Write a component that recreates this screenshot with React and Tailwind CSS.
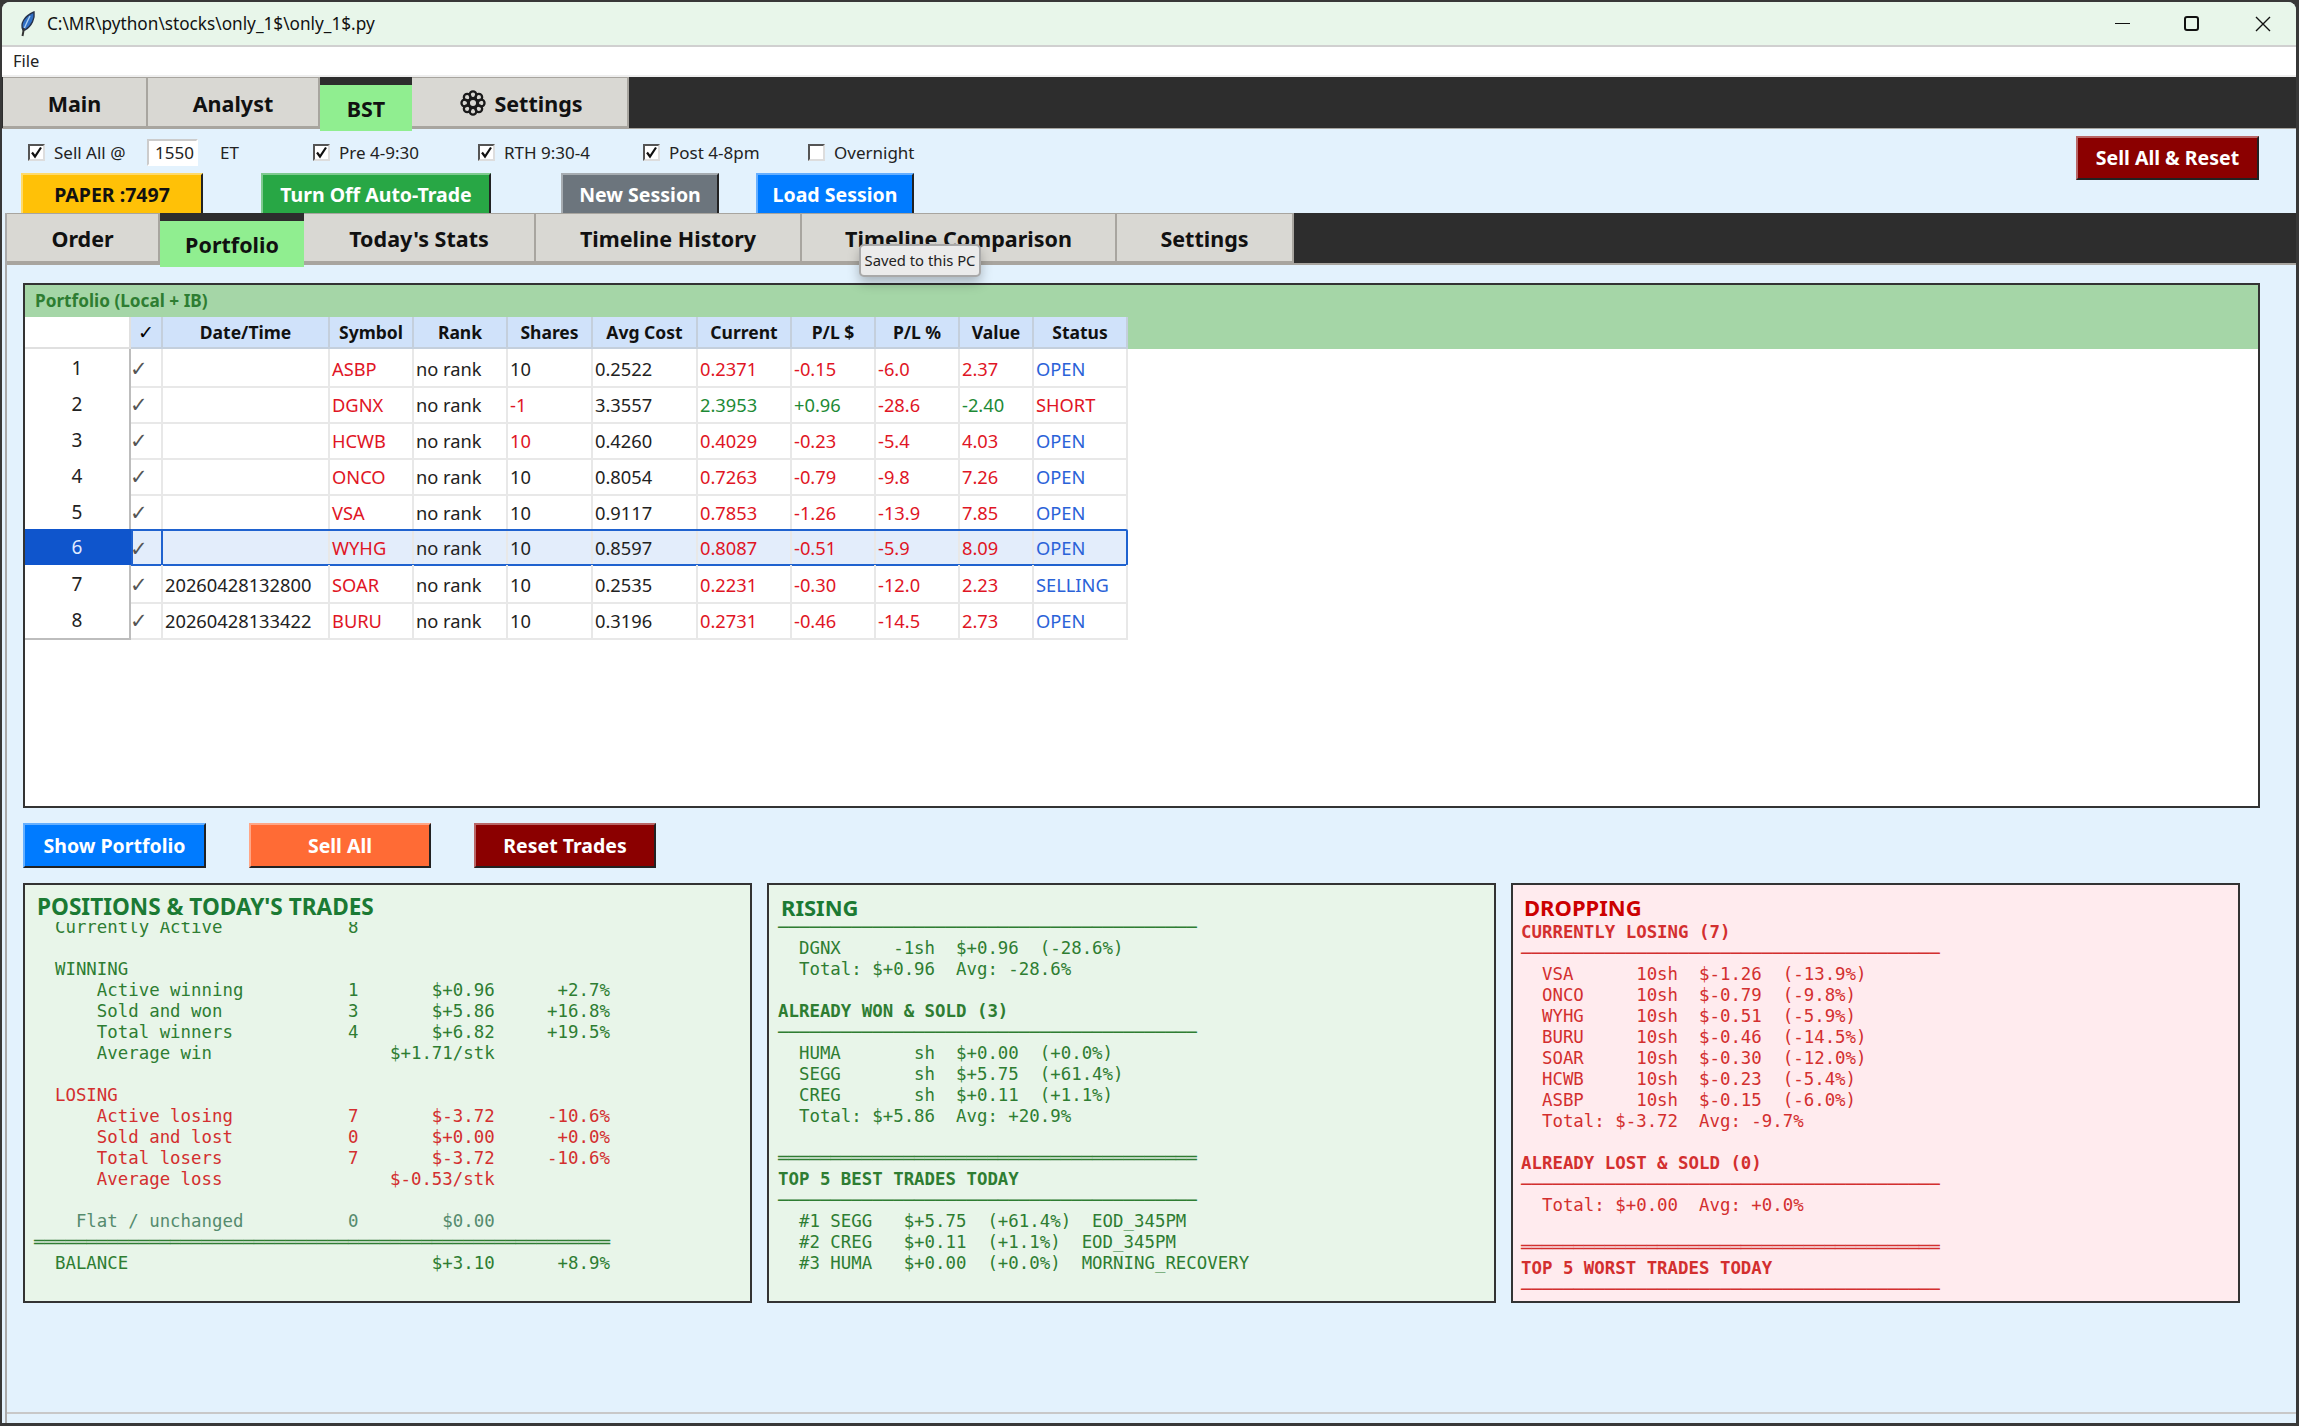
import React from 'react';

const GRID = 'grid grid-cols-[106px_32px_167px_84px_94px_85px_105px_94px_84px_84px_74px_94px]';

const rows = [
  ['', 'ASBP', '10', '0.2522', '0.2371', '-0.15', '-6.0', '2.37', 'OPEN'],
  ['', 'DGNX', '-1', '3.3557', '2.3953', '+0.96', '-28.6', '-2.40', 'SHORT'],
  ['', 'HCWB', '10', '0.4260', '0.4029', '-0.23', '-5.4', '4.03', 'OPEN'],
  ['', 'ONCO', '10', '0.8054', '0.7263', '-0.79', '-9.8', '7.26', 'OPEN'],
  ['', 'VSA', '10', '0.9117', '0.7853', '-1.26', '-13.9', '7.85', 'OPEN'],
  ['', 'WYHG', '10', '0.8597', '0.8087', '-0.51', '-5.9', '8.09', 'OPEN'],
  ['20260428132800', 'SOAR', '10', '0.2535', '0.2231', '-0.30', '-12.0', '2.23', 'SELLING'],
  ['20260428133422', 'BURU', '10', '0.3196', '0.2731', '-0.46', '-14.5', '2.73', 'OPEN'],
];

// fixed column layout of the summary text
const stat = (label, n = '', money = '', pct = '') =>
  label.padEnd(30) + n.padEnd(1) + money.padStart(13) + pct.padStart(11);

const G = 'text-[#2e7d32]';
const R = 'text-[#d32f2f]';

const single = '─'.repeat(40);
const double = '═'.repeat(40);

const positionLines = [
  [stat('  Currently Active', '8'), G],
  ['', G],
  ['  WINNING', G],
  [stat('      Active winning', '1', '$+0.96', '+2.7%'), G],
  [stat('      Sold and won', '3', '$+5.86', '+16.8%'), G],
  [stat('      Total winners', '4', '$+6.82', '+19.5%'), G],
  [stat('      Average win', ' ', '$+1.71/stk'), G],
  ['', G],
  ['  LOSING', R],
  [stat('      Active losing', '7', '$-3.72', '-10.6%'), R],
  [stat('      Sold and lost', '0', '$+0.00', '+0.0%'), R],
  [stat('      Total losers', '7', '$-3.72', '-10.6%'), R],
  [stat('      Average loss', ' ', '$-0.53/stk'), R],
  ['', G],
  [stat('    Flat / unchanged', '0', '$0.00'), 'text-[#558b6e]'],
  ['═'.repeat(55), G],
  [stat('  BALANCE', ' ', '$+3.10', '+8.9%'), G],
];

const risingLines = [
  [single, G],
  ['  DGNX     -1sh  $+0.96  (-28.6%)', G],
  ['  Total: $+0.96  Avg: -28.6%', G],
  ['', G],
  ['ALREADY WON & SOLD (3)', G, true],
  [single, G],
  ['  HUMA       sh  $+0.00  (+0.0%)', G],
  ['  SEGG       sh  $+5.75  (+61.4%)', G],
  ['  CREG       sh  $+0.11  (+1.1%)', G],
  ['  Total: $+5.86  Avg: +20.9%', G],
  ['', G],
  [double, G],
  ['TOP 5 BEST TRADES TODAY', G, true],
  [single, G],
  ['  #1 SEGG   $+5.75  (+61.4%)  EOD_345PM', G],
  ['  #2 CREG   $+0.11  (+1.1%)  EOD_345PM', G],
  ['  #3 HUMA   $+0.00  (+0.0%)  MORNING_RECOVERY', G],
];

const droppingLines = [
  ['CURRENTLY LOSING (7)', R, true],
  [single, R],
  ['  VSA      10sh  $-1.26  (-13.9%)', R],
  ['  ONCO     10sh  $-0.79  (-9.8%)', R],
  ['  WYHG     10sh  $-0.51  (-5.9%)', R],
  ['  BURU     10sh  $-0.46  (-14.5%)', R],
  ['  SOAR     10sh  $-0.30  (-12.0%)', R],
  ['  HCWB     10sh  $-0.23  (-5.4%)', R],
  ['  ASBP     10sh  $-0.15  (-6.0%)', R],
  ['  Total: $-3.72  Avg: -9.7%', R],
  ['', R],
  ['ALREADY LOST & SOLD (0)', R, true],
  [single, R],
  ['  Total: $+0.00  Avg: +0.0%', R],
  ['', R],
  [double, R],
  ['TOP 5 WORST TRADES TODAY', R, true],
  [single, R],
];

const Feather = () => (
  <svg width="20" height="26" viewBox="0 0 20 26" className="shrink-0">
    <path d="M5 19 C2 13 6 5 16 1 C17 7 14 15 7 19 Z" fill="#2f6fc4" stroke="#26324a" strokeWidth="1.4" />
    <path d="M12 5 C10 9 8 13 6 18" stroke="#a9cdf0" strokeWidth="1.4" fill="none" />
    <path d="M6 17 L4.5 25" stroke="#333" strokeWidth="2" fill="none" />
  </svg>
);

const Gear = () => (
  <svg width="26" height="26" viewBox="0 0 25 25" className="shrink-0 ml-[4px] -mt-[2px]">
    <g fill="none" stroke="#1a1a1a" strokeWidth="2.2">
      <circle cx="12.5" cy="4.6" r="3.2" />
      <circle cx="18.1" cy="6.9" r="3.2" />
      <circle cx="20.4" cy="12.5" r="3.2" />
      <circle cx="18.1" cy="18.1" r="3.2" />
      <circle cx="12.5" cy="20.4" r="3.2" />
      <circle cx="6.9" cy="18.1" r="3.2" />
      <circle cx="4.6" cy="12.5" r="3.2" />
      <circle cx="6.9" cy="6.9" r="3.2" />
      <circle cx="12.5" cy="12.5" r="4" />
    </g>
  </svg>
);

const Tab = ({ width, active, children }) =>
  active ? (
    <div className={`${width} relative z-10 flex flex-col`}>
      <div className="h-[8px] shrink-0 bg-[#2d2d2d]" />
      <div className="h-[46px] shrink-0 bg-[#90ee90] flex items-center justify-center pt-[2px] text-[21.5px] font-bold text-[#111]">{children}</div>
    </div>
  ) : (
    <div className={`${width} h-full bg-[#d9d8d3] border-r-2 border-b-2 border-t border-[#a8a59f] flex items-center justify-center gap-[8px] pt-[4px] text-[21.5px] font-bold text-[#111]`}>{children}</div>
  );

const Check = ({ on = true, label, width }) => (
  <div className={`${width} flex items-center gap-[9px] text-[17px] text-[#222]`}>
    <div className="w-[17px] h-[17px] bg-white border-2 border-[#555] border-r-[#ddd] border-b-[#ddd] flex items-center justify-center">
      {on && (
        <svg width="13" height="13" viewBox="0 0 13 13">
          <path d="M2 6.5 L5 10.5 L11 1.5" fill="none" stroke="#111" strokeWidth="2.2" />
        </svg>
      )}
    </div>
    <span>{label}</span>
  </div>
);

const Btn = ({ className, children }) => (
  <div className={`border-2 border-t-white/40 border-l-white/40 border-r-[#222] border-b-[#222] flex items-center justify-center text-[19.5px] font-bold ${className}`}>{children}</div>
);

const HeadCell = ({ children }) => (
  <div className="bg-[#d0e2fa] border-r-2 border-b-2 border-[#c4cfdc] flex items-center justify-center text-[17.5px] font-bold text-[#111]">{children}</div>
);

const Cell = ({ color = 'text-[#222]', children }) => (
  <div className={`border-r-2 border-b-2 border-[#e8e8e8] pl-[2px] pt-[2px] flex items-center text-[18.3px] whitespace-nowrap overflow-hidden ${color}`}>{children}</div>
);

const TableRow = ({ idx, row }) => {
  const selected = idx === 6;
  const [date, symbol, shares, avg, cur, pl, pct, value, status] = row;
  const gain = pl.startsWith('+');
  const priceColor = gain ? 'text-[#1d8a36]' : 'text-[#e01525]';
  const sharesColor = shares === '-1' || symbol === 'HCWB' ? 'text-[#e01525]' : 'text-[#222]';
  const statusColor = status === 'SHORT' ? 'text-[#e01525]' : 'text-[#2a62d8]';
  return (
    <div className={`${GRID} h-[36px] w-fit`}>
      <div className={`border-r-2 border-b-2 pt-[2px] flex items-center justify-center text-[19px] ${selected ? 'bg-[#0f55cc] border-[#0f55cc] text-[#dfeaff]' : 'bg-white border-[#bdbdbd] text-[#222]'}`}>{idx}</div>
      <div className={`col-span-11 grid grid-cols-subgrid ${selected ? 'bg-[#e3edfb] outline-2 -outline-offset-2 outline-[#1f62cf] rounded-r-[2px]' : ''}`}>
        <div className={`flex items-center pt-[5px] text-[21px] text-[#555] font-['DejaVu_Sans',sans-serif] ${selected ? 'outline-2 -outline-offset-2 outline-[#1f62cf]' : 'border-r-2 border-b-2 border-[#e8e8e8]'}`}><span className="-ml-[1px]">✓</span></div>
        <Cell>{date}</Cell>
        <Cell color="text-[#e01525]">{symbol}</Cell>
        <Cell>no rank</Cell>
        <Cell color={sharesColor}>{shares}</Cell>
        <Cell>{avg}</Cell>
        <Cell color={priceColor}>{cur}</Cell>
        <Cell color={priceColor}>{pl}</Cell>
        <Cell color="text-[#e01525]">{pct}</Cell>
        <Cell color={priceColor}>{value}</Cell>
        <Cell color={statusColor}>{status}</Cell>
      </div>
    </div>
  );
};

const Summary = ({ tint, title, titleClass, titlePad, offset, textPad, lines }) => (
  <div className={`w-[729px] h-[420px] border-2 border-[#333] ${tint} flex flex-col overflow-hidden`}>
    <div className={`h-[37px] shrink-0 flex items-end ${titlePad} font-bold leading-[30px] ${titleClass}`}>{title}</div>
    <div className="flex-1 overflow-hidden">
      <div className={`${offset} ${textPad} font-['DejaVu_Sans_Mono',monospace] text-[17.4px]`}>
        {lines.map(([text, color, bold], i) => (
          <div key={i} className={`h-[21px] leading-[21px] whitespace-pre ${color} ${bold ? 'font-bold' : ''}`}>{text}</div>
        ))}
      </div>
    </div>
  </div>
);

export default function App() {
  return (
    <div className="w-[2299px] h-[1426px] bg-[#383838] pt-[2px] pl-[2px] pr-[3px] font-['Noto_Sans',sans-serif] overflow-hidden">
      <div className="h-[1421px] rounded-t-[8px] overflow-hidden bg-[#e3f2fd] flex flex-col">
        {/* title bar */}
        <div className="h-[45px] shrink-0 bg-[#e8f6ea] border-b-2 border-[#d0d0d0] flex items-center">
          <div className="ml-[16px] w-[29px]"><Feather /></div>
          <span className="text-[17.2px] text-[#111]">C:\MR\python\stocks\only_1$\only_1$.py</span>
          <div className="ml-auto flex items-center">
            <div className="w-[15px] h-[1.5px] bg-[#111] mr-[54px]" />
            <div className="w-[15px] h-[15px] border-2 border-[#111] rounded-[3px] mr-[56px]" />
            <svg width="16" height="16" viewBox="0 0 16 16" className="mr-[25px]">
              <path d="M1 1 L15 15 M15 1 L1 15" stroke="#111" strokeWidth="1.4" />
            </svg>
          </div>
        </div>
        {/* menu */}
        <div className="h-[30px] shrink-0 bg-white border-b-2 border-[#eeeeee] flex items-center pl-[11px] text-[16.5px] text-[#222]">File</div>

        {/* main tabs */}
        <div className="h-[52px] shrink-0 bg-[#2d2d2d] flex border-b border-[#a8a59f] pl-[1px]">
          <Tab width="w-[145px]">Main</Tab>
          <Tab width="w-[172px]">Analyst</Tab>
          <Tab width="w-[92px]" active>BST</Tab>
          <Tab width="w-[217px]"><Gear />Settings</Tab>
        </div>

        {/* session controls */}
        <div className="h-[84px] shrink-0 flex">
          <div className="flex-1 flex flex-col">
            <div className="h-[44px] flex items-center pt-[3px] pl-[26px]">
              <Check label="Sell All @" width="w-[119px]" />
              <div className="w-[51px] h-[27px] bg-white border-2 border-[#ccc] border-r-white border-b-white flex items-center pl-[6px] text-[17px] text-[#222]">1550</div>
              <span className="ml-[22px] w-[93px] text-[17px] text-[#222]">ET</span>
              <Check label="Pre 4-9:30" width="w-[165px]" />
              <Check label="RTH 9:30-4" width="w-[165px]" />
              <Check label="Post 4-8pm" width="w-[165px]" />
              <Check on={false} label="Overnight" width="w-[140px]" />
            </div>
            <div className="h-[40px] flex pl-[19px]">
              <Btn className="w-[182px] pt-[2px] bg-[#ffc107] text-[#111] border-b-0">PAPER :7497</Btn>
              <Btn className="w-[230px] pt-[2px] ml-[58px] bg-[#28a745] text-white border-b-0">Turn Off Auto-Trade</Btn>
              <Btn className="w-[158px] pt-[2px] ml-[70px] bg-[#6c757d] text-white border-b-0">New Session</Btn>
              <Btn className="w-[158px] pt-[2px] ml-[37px] bg-[#007bff] text-white border-b-0">Load Session</Btn>
            </div>
          </div>
          <Btn className="w-[183px] h-[44px] mt-[7px] mr-[37px] bg-[#8b0000] text-white">Sell All &amp; Reset</Btn>
        </div>

        {/* sub tabs + body */}
        <div className="flex-1 ml-[3px] border-l-2 border-[#aaa] flex flex-col relative">
          <div className="h-[52px] shrink-0 bg-[#2d2d2d] flex border-b-2 border-[#a8a59f]">
            <Tab width="w-[153px]">Order</Tab>
            <Tab width="w-[144px]" active>Portfolio</Tab>
            <Tab width="w-[232px]">Today's Stats</Tab>
            <Tab width="w-[266px]">Timeline History</Tab>
            <Tab width="w-[315px]">Timeline Comparison</Tab>
            <Tab width="w-[177px]">Settings</Tab>
          </div>
          {/* tooltip */}
          <div className="absolute left-[852px] top-[31px] z-20 w-[122px] h-[33px] rounded-[5px] bg-[#ebebeb] border-2 border-[#a9a9a9] shadow-[0_6px_12px_rgba(0,0,0,0.25)] flex items-center justify-center text-[14.8px] text-[#222] whitespace-nowrap">Saved to this PC</div>

          <div className="flex-1 pt-[18px] pl-[16px] pr-[36px] flex flex-col">
            {/* portfolio table */}
            <div className="h-[525px] shrink-0 bg-white border-2 border-[#333] overflow-hidden">
              <div className="bg-[#a5d6a7]">
                <div className="h-[32px] pl-[10px] flex items-center text-[17.2px] font-bold text-[#2e7d32]">Portfolio (Local + IB)</div>
                <div className={`${GRID} h-[32px] w-fit`}>
                  <div className="bg-white border-b-2 border-r-2 border-[#e0e0e0]" />
                  <HeadCell><span className="font-['DejaVu_Sans',sans-serif] text-[19px] text-black">✓</span></HeadCell>
                  <HeadCell>Date/Time</HeadCell>
                  <HeadCell>Symbol</HeadCell>
                  <HeadCell>Rank</HeadCell>
                  <HeadCell>Shares</HeadCell>
                  <HeadCell>Avg Cost</HeadCell>
                  <HeadCell>Current</HeadCell>
                  <HeadCell>P/L $</HeadCell>
                  <HeadCell>P/L %</HeadCell>
                  <HeadCell>Value</HeadCell>
                  <HeadCell>Status</HeadCell>
                </div>
              </div>
              {rows.map((row, i) => <TableRow key={i} idx={i + 1} row={row} />)}
            </div>

            {/* actions */}
            <div className="flex gap-[43px] mt-[15px]">
              <Btn className="w-[183px] h-[45px] bg-[#007bff] text-white">Show Portfolio</Btn>
              <Btn className="w-[182px] h-[45px] bg-[#ff6b35] text-white">Sell All</Btn>
              <Btn className="w-[182px] h-[45px] bg-[#8b0000] text-white">Reset Trades</Btn>
            </div>

            {/* summaries */}
            <div className="flex gap-[15px] mt-[15px]">
              <Summary
                tint="bg-[#e8f5e9]"
                title="POSITIONS & TODAY'S TRADES"
                titleClass="text-[22.6px] text-[#1b7a34]"
                titlePad="pl-[12px]"
                offset="-mt-[5px]"
                textPad="pl-[9px]"
                lines={positionLines}
              />
              <Summary
                tint="bg-[#e8f5e9]"
                title="RISING"
                titleClass="text-[22px] text-[#1b7a34]"
                titlePad="pl-[12px]"
                offset="-mt-[5px]"
                textPad="pl-[9px]"
                lines={risingLines}
              />
              <Summary
                tint="bg-[#ffebee]"
                title="DROPPING"
                titleClass="text-[22px] text-[#cc0000]"
                titlePad="pl-[11px]"
                offset="mt-0"
                textPad="pl-[8px]"
                lines={droppingLines}
              />
            </div>
          </div>

          {/* bottom status strip */}
          <div className="h-[11px] shrink-0 border-t-2 border-[#c8c8c8]" />
        </div>
      </div>
    </div>
  );
}
